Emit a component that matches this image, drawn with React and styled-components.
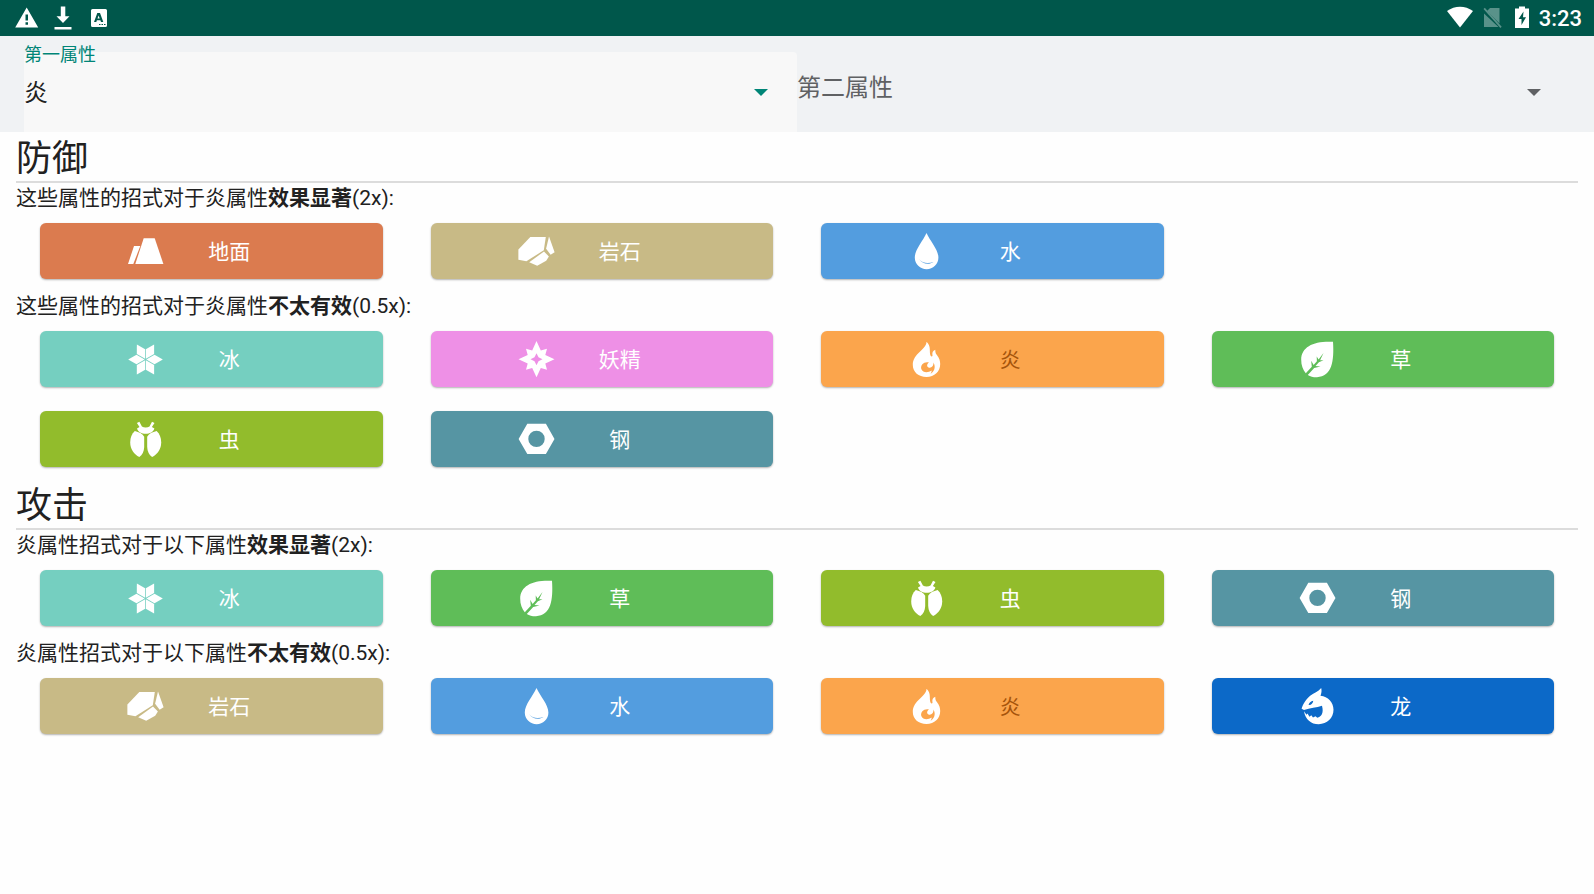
import React, { useState } from "react";
import styled, { createGlobalStyle } from "styled-components";

const GlobalStyle = createGlobalStyle`
  * {
    box-sizing: border-box;
  }

  body {
    margin: 0;
    background-color: #fefefe;
    color: #212121;
    font-family: Roboto, "Noto Sans CJK SC", sans-serif;
  }

  button, select {
    font-family: inherit;
  }
`;

const StatusBar = styled.div`
  display: flex;
  justify-content: space-between;
  align-items: center;
  height: 36px;
  padding: 0 12px 0 15px;
  background-color: #00574b;
  color: #fff;
`;

const StatusGroup = styled.div`
  display: flex;
  align-items: center;
  gap: ${({ $gap }) => $gap}px;

  svg {
    display: block;
    fill: #fff;
  }
`;

const Clock = styled.time`
  padding-top: 2px;
  font-size: 22px;
  font-weight: 500;
  line-height: 34px;
`;

const Toolbar = styled.header`
  display: grid;
  grid-template-columns: 1fr 1fr;
  padding: 16px 24px 0;
  background-color: #f0f2f4;
`;

const Field = styled.div`
  position: relative;
  display: flex;
  align-items: center;
  border-radius: 4px 4px 0 0;
  background-color: ${({ $active }) => ($active ? "#f8f8f8" : "transparent")};
  color: ${({ $active }) => ($active ? "#008577" : "#5f6163")};
`;

const FieldLabel = styled.label`
  position: absolute;
  left: 0;
  top: ${({ $floating }) => ($floating ? "-11px" : "22px")};
  font-size: ${({ $floating }) => ($floating ? "18px" : "24px")};
  line-height: 28px;
  pointer-events: none;
`;

const Select = styled.select`
  width: 100%;
  height: 80px;
  padding: 2px 60px 0 0;
  border: 0;
  outline: 0;
  appearance: none;
  background-color: transparent;
  color: #212121;
  font-size: 24px;
`;

const Caret = styled.svg`
  position: absolute;
  right: 29px;
  width: 14px;
  height: 7px;
  fill: currentColor;
  pointer-events: none;
`;

const Content = styled.main`
  padding: 0 16px;
`;

const SectionTitle = styled.h1`
  margin: 0;
  padding-top: 5px;
  border-bottom: 2px solid #dcdcdc;
  font-size: 36px;
  font-weight: 400;
  line-height: 44px;
`;

const Description = styled.p`
  margin: 0;
  padding-top: 3px;
  font-size: 21px;
  line-height: 25px;
`;

const TypeGrid = styled.div`
  display: grid;
  grid-template-columns: repeat(4, 1fr);
`;

const TypeButton = styled.button`
  display: flex;
  align-items: center;
  height: 56px;
  margin: 12px 24px;
  padding: 0 88px;
  border: 0;
  border-radius: 6px;
  background-color: ${({ $background }) => $background};
  box-shadow: 0 1px 2px rgba(0, 0, 0, 0.3);
  color: ${({ $color }) => $color || "#fff"};
  font-size: 21px;
  cursor: pointer;
`;

const TypeIcon = styled.svg`
  flex: none;
  width: 36px;
  height: 36px;
  overflow: visible;
  fill: #fff;
`;

const TypeName = styled.span`
  flex: 1;
  padding-top: 2px;
  text-align: center;
  line-height: 28px;
`;

const TYPES = {
  ground: {
    name: "地面",
    background: "#db7b4f",
    icon: (
      <>
        <path d="M0 31 6 13h6.3L5.3 31z" />
        <path d="M7.3 31 15.7 5.3h11L35.4 31z" />
      </>
    ),
  },
  rock: {
    name: "岩石",
    background: "#c8ba86",
    icon: (
      <>
        <path d="M11.3 4h15.5l-2 13.2L7.4 28.3-.6 26.8v-10.4z" />
        <path d="m30 3.500 5.600 15.800-4 2.500-4.500-6z" />
        <path d="m25 18.500 4.900 5-2.700 4.200-9 5-8-3.500z" />
      </>
    ),
  },
  water: {
    name: "水",
    background: "#539ddf",
    icon: (
      <path
        fillRule="evenodd"
        d="M17.5 0C14 8 5.800 16.500 5.800 24.500a11.800 11.800 0 0 0 23.600 0C29.400 16.500 21 8 17.500 0zM10 26c3 5 10 6.200 14.500 3C19.500 30.500 13 30.500 10 26z"
      />
    ),
  },
  ice: {
    name: "冰",
    background: "#75cfc0",
    icon: (
      <g transform="translate(17.5 18.5)">
        {[0, 60, 120, 180, 240, 300].map((angle) => (
          <path key={angle} transform={`rotate(${angle})`} d="M.8 0 9-4.800 17.300 0 9 4.800z" />
        ))}
      </g>
    ),
  },
  fairy: {
    name: "妖精",
    background: "#ee90e6",
    icon: (
      <path
        fillRule="evenodd"
        d="M17.500 0 21.800 9.500 28 7.800 26.300 14 35.500 18.200 26.300 22.500 28 28.700 21.800 27 17.500 36.300 13.200 27 7 28.700 8.700 22.500-.5 18.200 8.700 14 7 7.800 13.200 9.500zM17.500 12.200 15.500 16.200 11.500 18.200 15.500 20.200 17.500 24.200 19.500 20.200 23.500 18.200 19.500 16.200z"
      />
    ),
  },
  fire: {
    name: "炎",
    background: "#fba54c",
    color: "#a5540b",
    icon: (
      <path
        fillRule="evenodd"
        d="M17.500 .8C17.500 8.500 3.800 12.500 3.800 24C3.800 31 9.500 36 17.500 36C25.500 36 31.200 30.500 31.200 23C31.200 18 29 15.500 27.500 13.500C26.500 12 26.200 10.500 26.300 8.700C23.500 9.800 23 12 23.500 14.500C23.500 15.800 22 15.800 21.500 14.500C20 10.500 22.500 5.500 17.500 .8zM12.300 28C11.300 24 15 20.300 20 21.500C17.800 22.800 17.500 25.500 19.500 26.500C22.300 27.500 24.700 25 24.500 21.500C27 26 25.300 31 21.500 32.700C22.500 31.500 22.800 30.500 22.500 29.500C19 32 14 32 12.300 28z"
      />
    ),
  },
  grass: {
    name: "草",
    background: "#5fbd58",
    icon: (
      <path
        fillRule="evenodd"
        d="M33 .8C14-.2 1.500 5.500 1.200 18.500C1.100 24.500 3 28.500 5.800 32.300L11.800 25.800 11.200 19.700 13.600 23.900 16.900 20.300 16.700 15.500 18.600 18.500 23.500 12 20.100 19.300 23.500 19.300 18.900 21.300 15.500 25.100 20.500 25.500 14.200 26.900 7.800 33.900C10.500 35.600 13.500 36.300 17 36.200C32 35.500 34.300 20 33 .8z"
      />
    ),
  },
  bug: {
    name: "虫",
    background: "#92bc2c",
    icon: (
      <>
        <path d="M6.800 10C11 11 14.700 12.700 16.200 15.700V26C16 30.500 14.300 34 11.300 36C6 33.500 2.200 28 2.200 21.500C2.200 16.500 3.800 13 6.800 10z" />
        <path d="M28.600 10C24.400 11 20.700 12.700 19.200 15.700V26C19.400 30.500 21.100 34 24.100 36C29.400 33.500 33.200 28 33.200 21.500C33.200 16.500 31.600 13 28.600 10z" />
        <path d="M11.400 .7 8.900 2 11.500 6 9 7.500C10 11 13.500 12.800 17.700 12.800S25.400 11 26.400 7.500L23.900 6 26.500 2 24 .7 21.500 5.400C19.500 6.800 15.900 6.800 13.900 5.400z" />
      </>
    ),
  },
  steel: {
    name: "钢",
    background: "#5695a3",
    icon: (
      <path
        fillRule="evenodd"
        d="M8.300 2.700H26.900L35.500 17.900 26.900 33.100H8.300L-.4 17.900zM17.500 9.700a8.200 8.200 0 1 0 0 16.400a8.200 8.200 0 1 0 0-16.400z"
      />
    ),
  },
  dragon: {
    name: "龙",
    background: "#0c69c8",
    icon: (
      <path
        fillRule="evenodd"
        d="M21.200 0C21.900 2.500 21.500 5.300 20.500 7.700C28 8.500 33.500 14 33.500 21.800C33.500 30 27 36.200 18.700 36.200C11 36.200 5.300 31.500 4 23.200L6.500 26.800 7.500 25.500 9.500 28.800 11.300 27.300 13 29.500 15.500 28.300 17.300 29.800C21.300 28.500 24 25.500 22 17.800C16.500 20 10 19.700 4 22L1.600 20.700C3 16 6.500 10.500 10.500 7.500C14 5 18 3.800 21.200 0zM13.300 12.700C10.800 13.300 9 14.700 8.500 16.800C11 17.300 12.800 15.500 13.300 12.700z"
      />
    ),
  },
};

const SECTIONS = [
  {
    title: "防御",
    groups: [
      {
        before: "这些属性的招式对于炎属性",
        effect: "效果显著",
        rate: "(2x):",
        types: ["ground", "rock", "water"],
      },
      {
        before: "这些属性的招式对于炎属性",
        effect: "不太有效",
        rate: "(0.5x):",
        types: ["ice", "fairy", "fire", "grass", "bug", "steel"],
      },
    ],
  },
  {
    title: "攻击",
    groups: [
      {
        before: "炎属性招式对于以下属性",
        effect: "效果显著",
        rate: "(2x):",
        types: ["ice", "grass", "bug", "steel"],
      },
      {
        before: "炎属性招式对于以下属性",
        effect: "不太有效",
        rate: "(0.5x):",
        types: ["rock", "water", "fire", "dragon"],
      },
    ],
  },
];

const TypeSelect = ({ id, label, value, active, onChange }) => (
  <Field $active={active}>
    <FieldLabel htmlFor={id} $floating={value !== ""}>
      {label}
    </FieldLabel>
    <Select id={id} value={value} onChange={(e) => onChange(e.target.value)}>
      <option value=""></option>
      {Object.keys(TYPES).map((key) => (
        <option key={key} value={key}>
          {TYPES[key].name}
        </option>
      ))}
    </Select>
    <Caret viewBox="0 0 14 7" aria-hidden="true">
      <path d="M0 0h14L7 7z" />
    </Caret>
  </Field>
);

const TypeCard = ({ type }) => {
  const { name, background, color, icon } = TYPES[type];

  return (
    <TypeButton type="button" $background={background} $color={color}>
      <TypeIcon viewBox="0 0 36 36" aria-hidden="true">
        {icon}
      </TypeIcon>
      <TypeName>{name}</TypeName>
    </TypeButton>
  );
};

const SystemBar = () => (
  <StatusBar>
    <StatusGroup $gap={12}>
      <svg width="24" height="24" viewBox="0 0 24 24" aria-hidden="true">
        <path fillRule="evenodd" d="M11.700 1.500 23.200 21.500H.2zM10.500 8.500v6h2.500v-6zM10.500 16.300v2.500h2.500v-2.500z" />
      </svg>
      <svg width="24" height="24" viewBox="0 0 24 24" aria-hidden="true">
        <path d="M9.800 .5h4.500v9.700h4.200L12 17 5.500 10.200h4.300zM3.500 21h17v2.500h-17z" />
      </svg>
      <svg width="24" height="24" viewBox="0 0 24 24" aria-hidden="true">
        <path
          fillRule="evenodd"
          d="M5.500 3h13a1.500 1.500 0 0 1 1.500 1.500v15a1.500 1.500 0 0 1-1.500 1.500h-13A1.500 1.500 0 0 1 4 19.500v-15A1.500 1.500 0 0 1 5.500 3zM10.300 7 7 16h2.300l.6-1.700h3.500l.6 1.700h2.300L13 7zM11.600 9.500l1.100 3.100h-2.200zM12 18v1h1.500v-1zM14.500 18v1H16v-1zM17 18v1h1.500v-1z"
        />
      </svg>
    </StatusGroup>
    <StatusGroup $gap={6}>
      <svg width="26" height="24" viewBox="0 0 26 24" aria-hidden="true">
        <path d="M13 21.500 0 5C8 -.7 18 -.7 26 5z" />
      </svg>
      <svg width="26" height="24" viewBox="0 0 26 24" aria-hidden="true">
        <g opacity="0.35">
          <path d="M11 2h9.500v15.500L8 5z" />
          <path d="M5 7.500 19.500 21H5z" />
          <path d="m4.500 3 1.300-1.300L22.700 20.700 21.400 22z" />
        </g>
      </svg>
      <svg width="22" height="24" viewBox="0 0 22 24" aria-hidden="true">
        <path fillRule="evenodd" d="M8 .5h6v2h4v19.500H4V2.500h4zM12.500 5.500 7.500 13h3v6l4.500-7.800h-3z" />
      </svg>
      <Clock>3:23</Clock>
    </StatusGroup>
  </StatusBar>
);

const App = () => {
  const [first, setFirst] = useState("fire");
  const [second, setSecond] = useState("");

  return (
    <>
      <GlobalStyle />
      <SystemBar />
      <Toolbar>
        <TypeSelect id="first-type" label="第一属性" value={first} active onChange={setFirst} />
        <TypeSelect id="second-type" label="第二属性" value={second} onChange={setSecond} />
      </Toolbar>
      <Content>
        {SECTIONS.map((section) => (
          <section key={section.title}>
            <SectionTitle>{section.title}</SectionTitle>
            {section.groups.map((group) => (
              <div key={group.effect}>
                <Description>
                  {group.before}
                  <b>{group.effect}</b>
                  {group.rate}
                </Description>
                <TypeGrid>
                  {group.types.map((type) => (
                    <TypeCard key={type} type={type} />
                  ))}
                </TypeGrid>
              </div>
            ))}
          </section>
        ))}
      </Content>
    </>
  );
};

export default App;
